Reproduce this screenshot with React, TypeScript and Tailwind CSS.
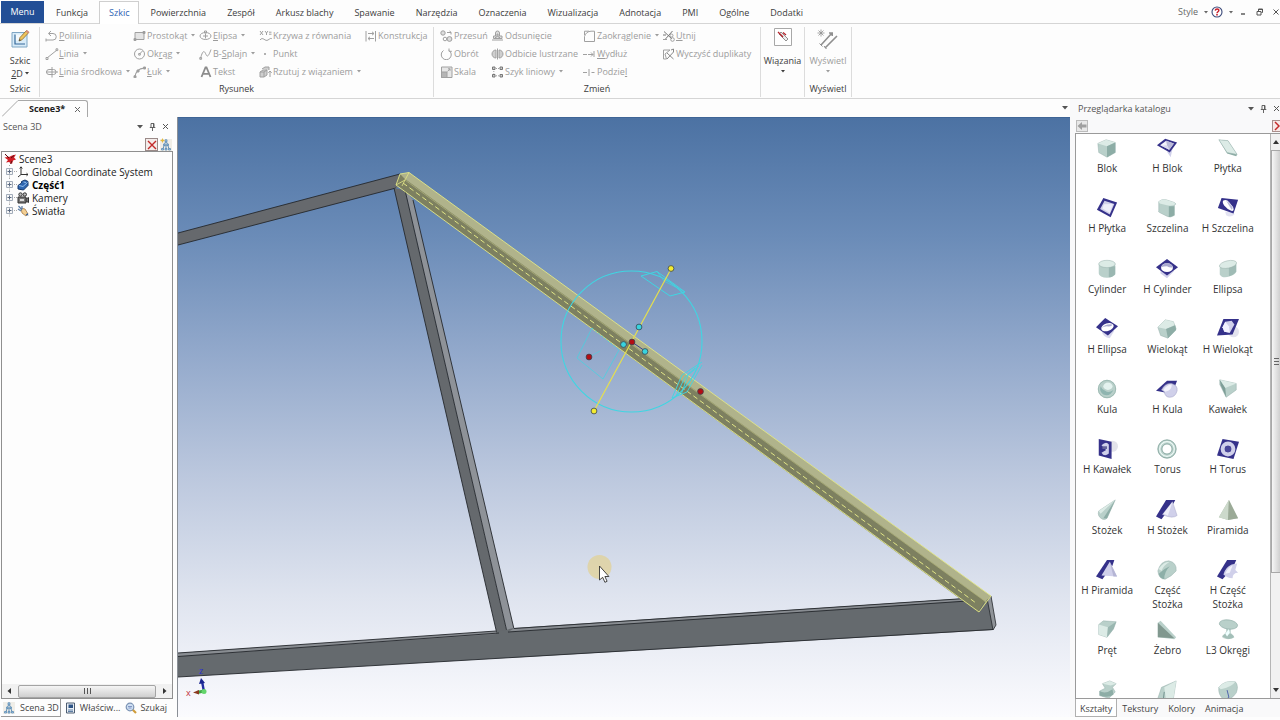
import type { ReactNode } from "react";

/* ---------- text helpers ---------- */

function Accel({ text }: { text: string }) {
  const i = text.indexOf("&");
  if (i < 0) return <>{text}</>;
  return (
    <span>
      {text.slice(0, i)}
      <u>{text[i + 1]}</u>
      {text.slice(i + 2)}
    </span>
  );
}

function Caret() {
  return (
    <svg viewBox="0 0 4 3" className="h-[3px] w-1 shrink-0" fill="currentColor" aria-hidden="true">
      <path d="M0 0h4L2 2.6z" />
    </svg>
  );
}

/* ---------- ribbon ---------- */

const toolIcons: Record<string, ReactNode> = {
  polyline: <path d="M1 10h7a3 3 0 0 0 0-6.5H4M6 1 3.4 3.5 6 6M1 8.5v3" />,
  line: <path d="M2 10 12 2M1 9.5h2v2H1zM11 .8h1.800v1.800H11z" />,
  centerline: <path d="M1 6h12M7 1v10.500M4 3.500h4.500a2.400 2.400 0 0 1 0 5H4a2.400 2.400 0 0 1 0-5" />,
  rect: (
    <>
      <path d="M2 2.500h9v7H2z" fill="#e4e4e4" />
      <path d="M10 1.500h2v2h-2zM1 8.500h2v2H1z" fill="#999" />
    </>
  ),
  circle: (
    <>
      <circle cx="6.500" cy="6" r="5" />
      <path d="M6.500 6 9.500 3M5.700 5.500h1.600v1.600H5.700z" />
    </>
  ),
  arc: (
    <>
      <path d="M2 11C2.500 6 6 2.500 11 2.200" strokeWidth="1.300" />
      <path d="M1 9.800h2v2H1zM10.500 1h2v2h-2zM4 4h2v2H4z" fill="#999" />
    </>
  ),
  ellipse: (
    <>
      <ellipse cx="6.500" cy="6" rx="5.500" ry="3.500" />
      <path d="M6.500 3.500v5M4 6h5M5.500 1h2v2h-2z" />
    </>
  ),
  spline: <path d="M1.500 10.500C4 1 5.500 3 7 6.500S10 7 12 1.500M.8 9.500h1.800v1.800H.8z" />,
  text: <path d="M2.500 11 6.500 1.500h1L11.500 11M4 7.800h6" strokeWidth="1.800" stroke="#8c8c8c" />,
  equation: (
    <>
      <path d="m1 1 3 4M4 1 1 5M6 1l1.500 2L9 1M7.500 3v2M10 2.200h2.500M10 4.200h2.500" />
      <path d="M1 10c3-4 5 2 8 0s3-2 4-1" />
    </>
  ),
  point: <path d="M5.500 5.500h1v1h-1z" fill="#999" />,
  project: (
    <>
      <path d="m1 6 3-2h4v5l-3 2H1zM1 6h4v5M5 6l3-2M3 3l3-2h4v3" fill="#cfcfcf" />
      <path d="M11 11V5M9.300 6.800 11 5l1.700 1.800" />
    </>
  ),
  construction: <path d="M2 1v10.500M11.500 1v10.500M4 3.500h6M8 1.800l2 1.700-2 1.700M10 8.500H4M6 6.800 4 8.500l2 1.700" />,
  move: (
    <>
      <circle cx="3" cy="3" r="2.200" fill="#ddd" />
      <circle cx="5" cy="9" r="1.800" />
      <circle cx="9.500" cy="9" r="2.400" fill="#ddd" />
      <path d="M7 2.500h4v2M9.500 1l1.800 1.500" />
    </>
  ),
  rotate: <path d="M3.500 2.500a5 5 0 1 0 5.500 0M9 .5v2.800h2.800" />,
  scale: (
    <>
      <path d="M1.500 1h10.500v10.500h-10.500z" fill="#e6e6e6" />
      <path d="M1.500 6h5.500v5.500H1.500z" fill="#b5b5b5" />
      <path d="M7.500 5.500 10 2.800M8 2.800h2v2" />
    </>
  ),
  offset: (
    <>
      <path d="M1 10h11M2.500 8.500V6h2V3a1.500 1.500 0 0 1 4 0v3H11v2.500z" fill="#e0e0e0" />
      <path d="M4.500 8.500V7H6V4h1v3h1.500v1.500" />
    </>
  ),
  mirror: (
    <>
      <path d="M6.500 .5v11" />
      <path d="M5 2v8C2.500 10 1 8 1 6s1.500-4 4-4zM8 2v8c2.500 0 4-2 4-4s-1.500-4-4-4z" fill="#cfcfcf" />
    </>
  ),
  pattern: (
    <>
      <path d="M1.500 1h2.500v2.500H1.500zM9 1h2.500v2.500H9zM1.500 8.500h2.500v2.500H1.500zM9 8.500h2.500v2.500H9z" stroke="#777" fill="#ccc" />
      <path d="M5 2.500h3M2.800 5v2.500M5 9.800h3" strokeDasharray="1 1" />
    </>
  ),
  fillet: <path d="M1.500 11.500V6.500Q3 1.500 8 1.200h3.500v10.300zM1.500 5V1.200H6" />,
  extend: <path d="M0 6.500h4M5 6.500h5M8 4.500l2 2-2 2M11 3v6" />,
  split: <path d="M0 6.500h4M8.500 6.500h3M6 3v7" />,
  trim: (
    <>
      <path d="M2 1.500 10 9M10.500 1 3.500 9M1 5h3" stroke="#777" />
      <circle cx="10.500" cy="9.500" r="1.800" />
      <circle cx="9.500" cy="5.500" r="1.500" />
      <path d="M1 9.500h4" />
    </>
  ),
  dedupe: (
    <>
      <path d="M1.500 2v9h3L3 6l5-4z" />
      <path d="m5 5 6.500 6M11.500 4 5 11M9 2l2.500-1v3" stroke="#888" />
    </>
  ),
};

type Tool = { icon: string; label: string; menu?: boolean };

function ToolButton({ icon, label, menu }: Tool) {
  return (
    <button type="button" className="flex h-[18px] items-center text-left whitespace-nowrap text-[#9c9c9c]">
      <svg
        viewBox="0 0 14 12"
        className="h-3 w-[14px] shrink-0"
        fill="none"
        stroke="#a0a0a0"
        strokeWidth="1"
        aria-hidden="true"
      >
        {toolIcons[icon]}
      </svg>
      <Accel text={label} />
      {menu && (
        <span className="pb-0.5 pl-1">
          <Caret />
        </span>
      )}
    </button>
  );
}

const drawTools: Tool[][] = [
  [
    { icon: "polyline", label: "&Polilinia" },
    { icon: "line", label: "&Linia", menu: true },
    { icon: "centerline", label: "&Linia środkowa", menu: true },
  ],
  [
    { icon: "rect", label: "Prostokąt", menu: true },
    { icon: "circle", label: "Ok&rąg", menu: true },
    { icon: "arc", label: "&Łuk", menu: true },
  ],
  [
    { icon: "ellipse", label: "&Elipsa", menu: true },
    { icon: "spline", label: "B-&Splajn", menu: true },
    { icon: "text", label: "Tekst" },
  ],
  [
    { icon: "equation", label: "Krzywa z równania" },
    { icon: "point", label: "Punkt" },
    { icon: "project", label: "Rzutuj z wiązaniem", menu: true },
  ],
  [{ icon: "construction", label: "Konstrukcja" }],
];

const editTools: Tool[][] = [
  [
    { icon: "move", label: "Przesuń" },
    { icon: "rotate", label: "Obrót" },
    { icon: "scale", label: "Skala" },
  ],
  [
    { icon: "offset", label: "Odsunięcie" },
    { icon: "mirror", label: "Odbicie lustrzane" },
    { icon: "pattern", label: "Szyk liniowy", menu: true },
  ],
  [
    { icon: "fillet", label: "Zaokrąglenie", menu: true },
    { icon: "extend", label: "&Wydłuż" },
    { icon: "split", label: "Podzie&l" },
  ],
  [
    { icon: "trim", label: "&Utnij" },
    { icon: "dedupe", label: "Wyczyść duplikaty" },
  ],
];

function Columns({ tools }: { tools: Tool[][] }) {
  return (
    <>
      {tools.map((col, i) => (
        <div key={i} className="flex flex-col">
          {col.map((t) => (
            <ToolButton key={t.label} {...t} />
          ))}
        </div>
      ))}
    </>
  );
}

function Group({ title, className, children }: { title: string; className: string; children: ReactNode }) {
  return (
    <section className={"flex flex-col border-r border-[#dcdcdc] " + className}>
      <div className="flex-1">{children}</div>
      <h2 className="h-4 text-center leading-4">{title}</h2>
    </section>
  );
}

const tabs = [
  "Funkcja",
  "Szkic",
  "Powierzchnia",
  "Zespół",
  "Arkusz blachy",
  "Spawanie",
  "Narzędzia",
  "Oznaczenia",
  "Wizualizacja",
  "Adnotacja",
  "PMI",
  "Ogólne",
  "Dodatki",
];

function Ribbon() {
  return (
    <header className="shrink-0">
      <nav className="flex h-6 items-end border-b border-[#d5d5d5] pt-[2px] pl-px">
        <button type="button" className="h-[22px] w-[43px] bg-[#234f96] text-white">
          Menu
        </button>
        <div className="flex h-[22px] gap-px pl-[2px]">
          {tabs.map((t) =>
            t === "Szkic" ? (
              <button
                key={t}
                type="button"
                className="-mb-px h-[23px] border border-b-0 border-[#cfcfcf] bg-white px-[9px] text-[#2f66b5]"
              >
                {t}
              </button>
            ) : (
              <button key={t} type="button" className="px-[10px] pt-px">
                {t}
              </button>
            ),
          )}
        </div>
        <div className="ml-auto flex h-[22px] items-center text-[#666]">
          <button type="button" className="flex items-center gap-[6px]">
            Style <Caret />
          </button>
          <button type="button" aria-label="Pomoc" className="flex items-center gap-[6px] pl-[3px]">
            <svg viewBox="0 0 12 12" className="size-3">
              <circle cx="6" cy="6" r="5" fill="#fff" stroke="#3b4a7a" strokeWidth="1.100" />
              <path d="M4.300 4.600C4.500 2.400 8 2.500 7.800 4.600 7.600 5.800 6.100 5.800 6 7.300" fill="none" stroke="#c8202c" strokeWidth="1.500" />
              <path d="M5.200 8.100h1.600v1.400H5.200z" fill="#c8202c" />
            </svg>
            <Caret />
          </button>
          <button type="button" aria-label="Minimalizuj" className="flex pl-[7px]">
            <svg viewBox="0 0 6 8" className="h-2 w-[6px]" stroke="#444" strokeWidth="1.300">
              <path d="M1 6h4" />
            </svg>
          </button>
          <button type="button" aria-label="Przywróć" className="flex pl-[10px]">
            <svg viewBox="0 0 8 8" className="size-2" fill="none" stroke="#555">
              <path d="M1 3.500h4v3.500H1zM2.500 3V1h4v3.500H5.500M2.500 1.500h4" />
            </svg>
          </button>
          <button type="button" aria-label="Zamknij" className="flex pl-2">
            <svg viewBox="0 0 8 8" className="size-2" fill="none" stroke="#555">
              <path d="m1.500 1.500 5 5M6.500 1.500l-5 5" />
            </svg>
          </button>
        </div>
      </nav>

      <div className="flex h-[75px] border-b border-[#d5d5d5] pt-[3px] pb-px pl-px">
        <Group title="Szkic" className="w-[39px]">
          <button type="button" className="flex w-full flex-col items-center pt-[2px]">
            <svg viewBox="0 0 20 20" className="size-5" aria-hidden="true">
              <path d="M2 3.500h15v14.500H2z" fill="#d8ebf8" stroke="#7fa6c4" />
              <path d="M5 5.500h7v6H5z" fill="#fff" opacity=".7" />
              <path d="M5 5.500v9.500h10" fill="none" stroke="#34699a" strokeWidth="1.200" />
              <path d="m9 12 1-3.500L16.500 1.500l2.300 2L12 10.800z" fill="#efc45c" stroke="#8a6a2c" strokeWidth=".8" />
              <path d="m15.500 2.600 1.500-1.500 2.300 2-1.500 1.500z" fill="#d78f7c" />
              <path d="m9 12 .6-2 1.400 1.300z" fill="#444" />
            </svg>
            <span className="pt-[5px] leading-[13px]">Szkic</span>
            <span className="flex items-center gap-0.5 leading-[13px]">
              <Accel text="&2D" /> <Caret />
            </span>
          </button>
        </Group>
        <Group title="Rysunek" className="w-[394px]">
          <div className="grid grid-cols-[88px_66px_60px_105px_auto] pl-[5px]">
            <Columns tools={drawTools} />
          </div>
        </Group>
        <Group title="Zmień" className="w-[327px]">
          <div className="grid grid-cols-[51px_92px_79px_auto] pl-[6px]">
            <Columns tools={editTools} />
          </div>
        </Group>
        <Group title="" className="w-11">
          <button type="button" className="flex w-full flex-col items-center">
            <svg viewBox="0 0 20 20" className="size-5" aria-hidden="true">
              <path d="M1.500 1.500h17v17h-17z" fill="#fff" stroke="#a8a8a8" />
              <path d="m6 7 2-2 7 7-2 2z" fill="#eee" stroke="#777" strokeWidth=".8" />
              <path d="m5 5 5 5M10 5.500l3 2.500" stroke="#b5242c" strokeWidth="1.300" />
            </svg>
            <span className="pt-[7px] pb-[3px] leading-[13px]">Wiązania</span>
            <Caret />
          </button>
        </Group>
        <Group title="Wyświetl" className="w-[47px]">
          <button type="button" className="flex w-full flex-col items-center pt-px text-[#9c9c9c]">
            <svg viewBox="0 0 24 22" className="h-[22px] w-6" fill="none" stroke="#8f8f8f" aria-hidden="true">
              <path d="M5 1.500v7M1.500 5h7M2.500 2.500l5 5M7.500 2.500l-5 5" strokeWidth=".8" />
              <path d="m5 17 11-12M13 5h3.200v3M9 20l12-12" strokeWidth="1.600" />
              <path d="m3.500 15.500 3 3M8 18l2.500 3" />
            </svg>
            <span className="pt-1 pb-[3px] leading-[13px]">Wyświetl</span>
            <Caret />
          </button>
        </Group>
      </div>
    </header>
  );
}

/* ---------- docked panel furniture ---------- */

function PanelTitle({ title }: { title: string }) {
  return (
    <div className="flex h-[19px] shrink-0 items-center text-[#555]">
      <h2 className="flex-1">{title}</h2>
      <div className="flex items-center gap-[6px] text-[#555]">
        <button type="button" aria-label="Opcje panelu">
          <svg viewBox="0 0 6 4" className="h-1 w-[6px]" fill="currentColor">
            <path d="M0 0h6L3 3.600z" />
          </svg>
        </button>
        <button type="button" aria-label="Przypnij">
          <svg viewBox="0 0 7 8" className="h-2 w-[7px]" fill="none" stroke="currentColor">
            <path d="M2 4.500v-4h3v4M.8 4.500h5.500M3.500 4.500V8M4.500 .5v4" strokeWidth=".9" />
          </svg>
        </button>
        <button type="button" aria-label="Zamknij panel">
          <svg viewBox="0 0 7 7" className="size-[7px]" fill="none" stroke="currentColor">
            <path d="m1 1 5 5M6 1 1 6" />
          </svg>
        </button>
      </div>
    </div>
  );
}

const Figures = () => (
  <svg viewBox="0 0 12 12" className="size-3 shrink-0 bg-[#f0eee8]" fill="none" stroke="#5d8db5" aria-hidden="true">
    <path d="M6 1.500 2.500 11M6 1.500 9.500 11M4.500 6h3M6 6v5" strokeWidth="1" />
    <path d="M5 .8h2v2H5zM3.500 5h1.500v1.500H3.500zM7 5h1.500v1.500H7zM1.500 9.500h2v1.500h-2zM5 9.500h2v1.500H5zM8.500 9.500h2v1.500h-2z" fill="#a9cbe6" strokeWidth=".8" />
  </svg>
);

const treeItems: { label: string; bold?: boolean; icon: ReactNode }[] = [
  {
    label: "Global Coordinate System",
    icon: (
      <path d="M4 1v7.500h7M4 8.500 1 11M2.700 2.500 4 .8l1.300 1.700M9.500 7.200l1.500 1.300-1.500 1.300" fill="none" stroke="#333" />
    ),
  },
  {
    label: "Część1",
    bold: true,
    icon: (
      <>
        <path d="M1 6.500 4.500 4V2.500L8 1l3 1.500v4L6.500 11 1 10z" fill="#2f66b0" stroke="#17386c" />
        <path d="m2 6.500 4 1 4.500-4M6.500 3 9 3.500" fill="none" stroke="#94bdea" />
      </>
    ),
  },
  {
    label: "Kamery",
    icon: (
      <>
        <path d="M1 5h8v6H1zM9 7l2.500-1.500v5L9 9" fill="#777" stroke="#333" />
        <circle cx="3.500" cy="2.500" r="1.700" fill="#bbb" stroke="#333" />
        <circle cx="7.800" cy="2.500" r="1.700" fill="#bbb" stroke="#333" />
        <path d="M3 7h4v2H3z" fill="#ddd" />
      </>
    ),
  },
  {
    label: "Światła",
    icon: (
      <>
        <path d="m4 3 4 1 3 5-2 2-4-3z" fill="#f3cf93" stroke="#a77b45" strokeWidth=".8" />
        <path d="m1.500 1 3.500 4M1 4l3 2M5 1v3" stroke="#5b7ea8" strokeWidth="1.200" />
        <path d="m8.500 10 2-2 1 2.500z" fill="#355f99" />
      </>
    ),
  },
];

function ScenePanel() {
  return (
    <aside className="flex w-[178px] shrink-0 flex-col border-r border-[#8a8f96] pl-px">
      <div className="flex flex-col pr-2 pl-[2px]">
        <PanelTitle title="Scena 3D" />
      </div>
      <div className="flex h-[15px] shrink-0 items-end justify-end gap-[2px] pr-[5px]">
        <button type="button" aria-label="Usuń" className="flex size-[13px] items-center justify-center border border-[#9a8a88] bg-[#f4ecea]">
          <svg viewBox="0 0 10 10" className="size-[10px]" stroke="#c22a2a" strokeWidth="1.400">
            <path d="m1 1 8 8M9 1 1 9" />
          </svg>
        </button>
        <button type="button" aria-label="Struktura" className="relative flex h-[13px] items-center">
          <Figures />
          <svg viewBox="0 0 5 5" className="absolute top-0 left-0 size-[5px]" fill="#e6bb3e">
            <path d="M2.500 0 3.300 1.700 5 2.500 3.300 3.300 2.500 5 1.700 3.300 0 2.500 1.700 1.700z" />
          </svg>
        </button>
      </div>
      <div className="mr-[4px] flex min-h-0 flex-1 flex-col border border-[#8f8f8f]">
        <div className="flex-1 overflow-hidden text-[10px] text-[#222]">
          <div className="flex h-[13px] items-center gap-[2px] pl-[2px]">
            <svg viewBox="0 0 13 12" className="h-3 w-[13px]" aria-hidden="true">
              <path d="M1 1.500 5 4l3-1.500 4-1-2 3 2 2-3 1-1 3.500-3-2-3 .5L4 7 .5 4.500 3.500 4z" fill="#d01f26" />
              <path d="m1 1 4 4M8 8l-1.500 3M10 2.500 7 5" stroke="#5a0f12" fill="none" />
            </svg>
            <span>Scene3</span>
          </div>
          <ul>
            {treeItems.map((item) => (
              <li key={item.label} className="flex h-[13px] items-center pl-[3px]">
                <button type="button" aria-label={"Rozwiń " + item.label} className="flex">
                  <svg viewBox="0 0 12 13" className="h-[13px] w-3" fill="none">
                    <path d="M4.500 0v2M4.500 10.500V13M9 6.500h3" stroke="#aaa" strokeDasharray="1 1" />
                    <path d="M1.500 3.500h6v6h-6z" stroke="#a3adba" fill="#f7f7f7" />
                    <path d="M2.500 6.500h4M4.500 4.500v4" stroke="#5c6b82" />
                  </svg>
                </button>
                <svg viewBox="0 0 12 12" className="size-3" aria-hidden="true">
                  {item.icon}
                </svg>
                <span className={item.bold ? "ml-[3px] font-bold text-black" : "ml-[3px]"}>{item.label}</span>
              </li>
            ))}
          </ul>
        </div>
        <div className="flex h-[14px] shrink-0 items-center justify-between bg-[#f1f1f1] px-[5px]">
          <svg viewBox="0 0 5 6" className="h-[6px] w-[5px]" fill="#333">
            <path d="M4 0v6L.5 3z" />
          </svg>
          <div className="mx-[6px] flex h-[13px] flex-1 items-center justify-center gap-[2px] rounded-[2px] border border-[#a4a4a4] bg-linear-to-b from-[#f5f5f5] to-[#cfcfcf]">
            <i className="h-[6px] w-px bg-[#555]" />
            <i className="h-[6px] w-px bg-[#555]" />
            <i className="h-[6px] w-px bg-[#555]" />
          </div>
          <svg viewBox="0 0 5 6" className="h-[6px] w-[5px]" fill="#333">
            <path d="M1 0v6l3.500-3z" />
          </svg>
        </div>
      </div>
      <div className="flex h-[18px] shrink-0 text-[#444]">
        <button type="button" className="flex h-[18px] items-center gap-[5px] border-r border-b border-[#9a9a9a] pt-px pr-px pl-[2px] whitespace-nowrap">
          <Figures />
          Scena 3D
        </button>
        <button type="button" className="flex items-center gap-1 pl-1 whitespace-nowrap">
          <svg viewBox="0 0 11 12" className="h-3 w-[11px]" aria-hidden="true">
            <path d="M1.500 1h8v10h-8z" fill="#e9eff5" stroke="#4c5c70" />
            <path d="M3.500 2.500H8v3.500H3.500z" fill="#2d5384" />
            <path d="M3 8h5M3 9.500h5" stroke="#5f7ea4" />
          </svg>
          Właściw...
        </button>
        <button type="button" className="flex items-center gap-[3px] pl-[5px] whitespace-nowrap">
          <svg viewBox="0 0 12 12" className="size-3" aria-hidden="true">
            <path d="m7 7 4 4" stroke="#cf9c3a" strokeWidth="2.200" />
            <circle cx="5" cy="5" r="3.800" fill="#cfe0f2" stroke="#7c93b4" strokeWidth="1.200" />
            <path d="M3 4.500h4M3.500 6h3" stroke="#8296c5" />
          </svg>
          Szukaj
        </button>
      </div>
    </aside>
  );
}

/* ---------- 3D viewport ---------- */

const Dot = ({ x, y, fill }: { x: number; y: number; fill: string }) => (
  <circle cx={x} cy={y} r="2.900" fill={fill} stroke="#3a4450" strokeWidth=".8" />
);

function Viewport() {
  return (
    <main className="min-w-0 flex-1 overflow-hidden border-t border-[#3f6596] bg-[#9fb2d2]">
      <svg viewBox="178 118 892 599" preserveAspectRatio="xMidYMid slice" className="block size-full" role="img" aria-label="Scena 3D">
        <defs>
          <linearGradient id="sky" x1="0" y1="0" x2="0" y2="1">
            <stop offset="0" stopColor="#4c72a3" />
            <stop offset=".2" stopColor="#6b8cb8" />
            <stop offset=".4" stopColor="#94aacc" />
            <stop offset=".6" stopColor="#bcc8de" />
            <stop offset=".8" stopColor="#dfe4ef" />
            <stop offset="1" stopColor="#fbfbfe" />
          </linearGradient>
        </defs>
        <rect x="178" y="118" width="892" height="599" fill="url(#sky)" />

        <g strokeLinejoin="round">
          <path d="M178 233 400 174 410 182 396 188 178 245z" fill="#66696d" />
          <path d="M178 233 400 174M178 245 396 188" stroke="#25282c" strokeWidth=".9" fill="none" />
          <path d="M394 188 405 190 507 632 497 634z" fill="#65696d" />
          <path d="M405 190 413 200 514 629 507 632z" fill="#8e9298" />
          <path d="M394 188 497 634M405 190 507 632M413 200 514 629" stroke="#25282c" strokeWidth=".9" fill="none" />
          <path d="M178 653 496 632 514 628 985 597 992 601 993 630 178 677z" fill="#656a6e" />
          <path d="M178 653 496 631V634L178 656.500z" fill="#898d92" />
          <path d="M514 628.500 978 597.500 970 600.500 508 632z" fill="#898d92" />
          <path d="M987 598 991 596 996 625 993 630z" fill="#8f9398" stroke="#25282c" strokeWidth=".8" />
          <path d="M178 653 496 631M178 656.500 499 633M514 628.500 980 597.500M508 632 975 600.500M178 677 993 629.500" stroke="#25282c" strokeWidth=".9" fill="none" />
        </g>

        <path d="M400 174 409 172.500 991 596 985 602 405 181z" fill="#b0b38b" />
        <path d="M396 185 400 174 405 179 985 601 978 612z" fill="#7d8060" />
        <path d="M985 602 991 596 980 611z" fill="#969a70" />
        <g fill="none" stroke="#e2e687">
          <path d="M396 185 400 174 409 172.500 991 596 979 612z" strokeWidth=".9" />
          <path d="M405 180 402 186M396 185 405 180M409 172.500 405 180" strokeWidth=".8" />
          <path d="M405 180 986 602" strokeWidth=".5" stroke="#c8cb86" />
          <path d="M403 183 976 603" strokeDasharray="5 3" />
        </g>

        <g fill="none" stroke="#3fd6e2">
          <circle cx="631.500" cy="341.500" r="70.500" strokeWidth="1.100" />
          <path d="M641 276 657 271.500 685 292 670 296z" />
          <path d="M657 271.500 664 281 685 292" strokeWidth=".7" />
          <path d="M592 328 577 358 603 379 619 350" strokeWidth=".7" />
          <path d="M592 328 619 350" strokeDasharray="2 2" strokeWidth=".8" />
          <path d="M589 357 600 351" strokeWidth=".5" />
          <path d="M702 362 682 375 672 398 687 392 702 365M695 368 685 377 676 396M699 366 688 375 681 395" strokeWidth=".9" />
        </g>

        <path d="M671 269 594 411" stroke="#e6e04c" strokeWidth="1.200" />
        <path d="M632 342 645 351" stroke="#3b3f90" />
        <Dot x={671} y={268.5} fill="#f4ec30" />
        <Dot x={594} y={411} fill="#f4ec30" />
        <Dot x={639} y={327} fill="#38d3de" />
        <Dot x={623.5} y={344.5} fill="#38d3de" />
        <Dot x={645} y={351.5} fill="#38d3de" />
        <Dot x={632} y={342} fill="#b40d14" />
        <Dot x={589} y={357} fill="#b40d14" />
        <Dot x={700.5} y={391.5} fill="#b40d14" />

        <circle cx="599.500" cy="567" r="12" fill="#e5cf82" opacity=".6" />
        <path d="M599.500 566v14l3.200-2.700 2.200 5 2.200-1-2.200-4.800h4z" fill="#fff" stroke="#333" strokeWidth=".9" />

        <path d="M204 692 202 681" stroke="#2430a0" strokeWidth="2.400" />
        <path d="m199 684 2-6 4 5z" fill="#1c2790" />
        <path d="M204 691 197 692.500" stroke="#3fa545" strokeWidth="3" />
        <path d="m199 690-6 2.500 6 2z" fill="#8a3a20" />
        <circle cx="204" cy="691.500" r="2.500" fill="#63d56b" />
        <text x="199" y="674" className="font-['Open_Sans',sans-serif] text-[9px]" fill="#2a2ed0">z</text>
        <text x="186" y="696" className="font-['Open_Sans',sans-serif] text-[9px]" fill="#c03040">x</text>
      </svg>
    </main>
  );
}

/* ---------- catalogue ---------- */

const solidStroke = { stroke: "#92aca6", strokeWidth: 0.5 };
const L = "#dcebe6";
const M = "#b9d0ca";
const D = "#8dada6";
const N = "#35318a";
const V = "#d0d0ea";

const shapes: { label: string; art: ReactNode }[] = [
  { label: "Blok", art: <><path d="m2 7 9-4 10 3v11l-9 5-9-5z" fill={M} {...solidStroke} /><path d="m2 7 9-4 10 3-9 4z" fill={L} /><path d="m12 10 9-4v11l-9 5z" fill={D} /></> },
  { label: "H Blok", art: <><path d="m12 16 5-2 1-1-2 9z" fill={V} /><path d="m1 9 9-7 13 4-8 11z" fill={N} /><path d="m4.500 9 6.500-5 8.500 3-5 7z" fill="#f2f2fb" /><path d="m11 4 1 5 2.500 5 5-7z" fill="#b9b9d8" /><path d="m6 9.500 6-.5 2.500 5z" fill="#d8d8ee" /></> },
  { label: "Płytka", art: <><path d="m2 3 10 1 10 15-1 2-10-3z" fill={D} /><path d="m2 3 10 1 10 15-11-2z" fill={L} {...solidStroke} /></> },
  { label: "H Płytka", art: <><path d="m8 1 15 5-7 16L1 14z" fill={N} /><path d="M9.300 4 20 7.500 15 19 4.500 13z" fill={V} /><path d="m8.500 8 10-.5-3.500 10-8-5z" fill="#eeeefa" /></> },
  { label: "Szczelina", art: <><path d="M3 5q3-3 8-2l9 3q3 2 0 3v11q-4 3-8 1l-8-4q-2-1-1-2z" fill={M} {...solidStroke} /><path d="M3 5q3-3 8-2l9 3q2 2-1 3-4 1-7 0L4 7z" fill={L} /><path d="M14 10h6v10q-3 2-6 2z" fill={D} /></> },
  { label: "H Szczelina", art: <><path d="M9 16h9l1 3q-4 4-9 1z" fill={V} opacity=".6" /><path d="m5 1 18 2-5 15L1 12z" fill={N} /><path d="M6.500 4q4-2 7 2l4 5q2 5-2 4-4-1-6-4-4-4-3-7" fill="#fff" /><path d="m10 4 6 10q1.500-1 1-3l-4-5z" fill="#b9b9da" /></> },
  { label: "Cylinder", art: <><path d="M3 6v11a9 4.500 0 0 0 18 0V6z" fill={M} /><path d="M14 9h7v9q-3 3-7 3z" fill={D} opacity=".7" /><ellipse cx="12" cy="6.500" rx="9" ry="4" fill={L} {...solidStroke} /></> },
  { label: "H Cylinder", art: <><path d="M5 14v3l7 5 8-8z" fill={V} /><path d="m12 1 12 9-12 9L0 10z" fill={N} /><ellipse cx="12" cy="10.500" rx="6.500" ry="4.800" fill="#fff" /><path d="M5.500 10q2-4 6.500-4.500Q17 6 18.500 10q-3 1-6.500-1-4 0-6.500 1" fill="#a9a9cf" /></> },
  { label: "Ellipsa", art: <><path d="M3 9v9q3 5 11 2 6-2 7-5V6z" fill={M} /><path d="M13 10q6-1 8-4v9q-3 4-8 5z" fill={D} opacity=".6" /><ellipse cx="12" cy="7" rx="9.500" ry="4" transform="rotate(-12 12 7)" fill={L} {...solidStroke} /></> },
  { label: "H Ellipsa", art: <><path d="M6 14q2 8 9 8l5-8z" fill={V} opacity=".8" /><path d="m10 0 14 9-11 10L0 10z" fill={N} /><ellipse cx="12.500" cy="10" rx="7" ry="4.200" transform="rotate(-18 12.500 10)" fill="#fff" /><path d="M6 11q4-5 12-4-1 3-6 2-4 0-6 2" fill="#a9a9cf" /></> },
  { label: "Wielokąt", art: <><path d="m2 10 8-8 9 2 3 8-9 10-8-3z" fill={M} {...solidStroke} /><path d="m2 10 8-8 9 2 1 4-9 4z" fill={L} /><path d="m11 12 10-4 1 5-9 9z" fill={D} /></> },
  { label: "H Wielokąt", art: <><circle cx="18" cy="15" r="6" fill="#e3e3ee" /><path d="M7 1h17l-7 17-17 1z" fill={N} /><path d="m9 4 7-1 3 4-5 9-6-1-2-5z" fill={V} /><path d="m9 4 4 5 1 7-6-1-2-5z" fill="#f2f2ff" /></> },
  { label: "Kula", art: <><circle cx="12" cy="12" r="10" fill={M} /><circle cx="12" cy="12" r="9.500" fill="none" stroke={D} strokeWidth=".7" /><path d="M5 9a8 8 0 0 0 3 9q7 3 11-5-5 4-9 1-4-2-5-5" fill="#8fb5b0" /><ellipse cx="13" cy="9" rx="5" ry="4" fill="#e4f2ef" /></> },
  { label: "H Kula", art: <><path d="M0 14 12 3h11l-4 10-8 3z" fill={N} /><path d="M6 13q4-8 11-7 7 2 6 8-2 7-8 7-5 0-6-6z" fill={V} stroke="#9f9fc4" strokeWidth=".6" /><path d="M8 13q4-6 9-6 1 6-7 8z" fill="#f2f2fb" /></> },
  { label: "Kawałek", art: <><path d="M3 2v5l7 14 11-8V6z" fill={M} {...solidStroke} /><path d="m3 2 18 4-12 5z" fill={L} /><path d="m3 2 6 9 1 10-6-13z" fill="#7e9e97" /></> },
  { label: "H Kawałek", art: <><circle cx="18" cy="9" r="6" fill="#e3e3ea" /><path d="m3 1 14 3v19L3 19z" fill={N} /><path d="M6 8q5-5 8-1v10q-5 4-8-1l5-3z" fill={V} /><path d="M7 9h5v3H7z" fill="#66659c" /></> },
  { label: "Torus", art: <><circle cx="12" cy="12" r="7.800" fill="none" stroke={M} strokeWidth="4.500" /><circle cx="12" cy="12" r="8" fill="none" stroke="#eefaf7" strokeWidth="1.300" /><circle cx="12" cy="12" r="10" fill="none" stroke="#7c9f98" strokeWidth=".9" /><circle cx="12" cy="12" r="5.500" fill="none" stroke="#7c9f98" strokeWidth=".9" /></> },
  { label: "H Torus", art: <><path d="m6 1 18 3-6 19-18-4z" fill={N} /><circle cx="12" cy="12" r="5.800" fill="none" stroke={V} strokeWidth="4.500" /><circle cx="12" cy="12" r="3.500" fill="#4a479a" /></> },
  { label: "Stożek", art: <><path d="M21 1 3 13q-2 6 4 9 3 1 5-1z" fill={M} {...solidStroke} /><path d="M21 1 8 21l4 0z" fill={D} /><path d="M21 1 3 13l2 3z" fill={L} /></> },
  { label: "H Stożek", art: <><path d="m0 19 11-18h10l-2 4-13 17z" fill={N} /><path d="m18 3 5 15q-5 4-16-1z" fill={V} stroke="#a5a5c5" strokeWidth=".5" /><path d="M18 3 8 16l5 2z" fill="#eeeefa" /></> },
  { label: "Piramida", art: <><path d="m13 1 10 20-11 2-10-3z" fill="#b2c2ae" /><path d="M13 1 2 20l10 3z" fill="#ccd9cb" /><path d="m13 1 10 20-11 2z" fill="#91a08d" opacity=".7" /></> },
  { label: "H Piramida", art: <><path d="m0 19 12-18h8l-2 6L7 22z" fill={N} /><path d="m15 3 8 16-17-1z" fill={V} /><path d="m15 3 4 16h4z" fill="#b5b5d4" /></> },
  { label: "Część Stożka", art: <><path d="M2 13Q5 2 14 2q9 2 8 11-5 6-12 9-7 0-8-9" fill={M} {...solidStroke} /><path d="M3 11q5-8 12-8-7 4-9 10z" fill={L} /><path d="M9 22q0-8 6-14-7 3-12 8 1 5 6 6" fill="#8dafa8" /></> },
  { label: "H Część Stożka", art: <><path d="m0 19 11-18h10l-4 9L6 22z" fill={N} /><path d="M7 17q2-8 9-11l6-1-2 7 3 3q-6 0-6 6-6 0-10-4" fill={V} /><path d="M9 16q2-6 8-9l-3 8z" fill="#f2f2fb" /></> },
  { label: "Pręt", art: <><path d="m3 6 5-4 14 1-3 8-7 9-9-3z" fill={M} {...solidStroke} /><path d="m3 6 10 3-1 11-9-3z" fill={L} /><path d="m13 9 9-6-3 8-7 9z" fill={D} opacity=".7" /></> },
  { label: "Żebro", art: <><path d="m2 4 3-2 17 18-2 2L2 20z" fill={M} /><path d="M2 4v16l18 1z" fill="#81988f" /></> },
  { label: "L3 Okręgi", art: <><path d="M10 10h5v5l4 5q-6 4-13-1l4-5z" fill={M} /><ellipse cx="12" cy="19" rx="6.500" ry="3" fill={D} opacity=".5" /><ellipse cx="12.500" cy="6" rx="10" ry="5" transform="rotate(8 12.500 6)" fill={M} stroke={D} strokeWidth=".7" /><path d="m13 11-4 5 2 3 3-4z" fill="#efffff" /></> },
];

const clippedShapes: { label: string; art: ReactNode }[] = [
  { label: "L3 Skręt", art: <><path d="m7 4 8-3 7 3-4 4 3 5-7 7-10-3v-5l6-3z" fill={M} {...solidStroke} /><path d="m7 4 8-3 7 3-6 2z" fill={L} /><path d="M4 12q6 4 14-2l1 6q-6 4-15 1z" fill={D} /></> },
  { label: "Klin", art: <><path d="m2 20 4-12 16-7-3 19-8 3z" fill={M} {...solidStroke} /><path d="m9 8 13-7-3 19-8 2z" fill={L} /><path d="m9 13-1 8" stroke="#6c8e8a" /></> },
  { label: "Walec ścięty", art: <><path d="M2 8q6-8 18-6 4 4 1 12-6 9-14 7-6-5-5-13" fill={M} {...solidStroke} /><path d="M2 8q6-8 18-6-4 6-16 8z" fill={L} /><path d="m11 11 2 8-3 2" stroke="#485caa" fill="none" /></> },
];

function CataloguePanel() {
  return (
    <aside className="flex w-[210px] shrink-0 flex-col bg-[#f9f9fa] pl-[5px]">
      <div className="flex flex-col overflow-hidden pl-[3px]">
        <PanelTitle title="Przeglądarka katalogu" />
      </div>
      <div className="flex h-[15px] shrink-0 items-center justify-between pl-px">
        <button type="button" aria-label="Wstecz" className="flex size-3 items-center justify-center border border-[#bbb] bg-[#e8e8e8]">
          <svg viewBox="0 0 10 10" className="size-[10px]" fill="#a0a0a0">
            <path d="M5 1v2.500h4.500v3H5V9L.5 5z" />
          </svg>
        </button>
        <button type="button" aria-label="Usuń katalog" className="flex h-3 w-2 items-center justify-end overflow-hidden border border-r-0 border-[#a98f8c] bg-[#f7e9e7]">
          <svg viewBox="0 0 6 10" className="h-[10px] w-[6px]" fill="none" stroke="#c42a2a" strokeWidth="1.500">
            <path d="m1 1 4 4-4 4" />
          </svg>
        </button>
      </div>
      <div className="flex min-h-0 flex-1 border border-r-0 border-[#9a9a9a] bg-white">
        <div className="min-w-0 flex-1 overflow-hidden">
          <ul className="grid h-[603px] w-[182px] grid-cols-3 grid-rows-10 pl-px text-center text-[10px] leading-[14px] text-[#333]">
            {shapes.map((s) => (
              <li key={s.label} className="flex h-0 justify-center pt-[3px]">
                <button type="button" className="flex h-fit w-[56px] shrink-0 flex-col items-center gap-[2px]">
                  <svg viewBox="0 0 24 24" className="size-[22px] shrink-0" aria-hidden="true">
                    {s.art}
                  </svg>
                  <span className="flex justify-center">{s.label}</span>
                </button>
              </li>
            ))}
            {clippedShapes.map((s) => (
              <li key={s.label} className="flex h-0 justify-center pt-[3px]">
                <button type="button" aria-label={s.label} className="h-fit">
                  <svg viewBox="0 0 24 24" className="size-[22px]" aria-hidden="true">
                    {s.art}
                  </svg>
                </button>
              </li>
            ))}
          </ul>
        </div>
        <div className="flex w-[10px] shrink-0 flex-col items-center border-l border-[#b5b5b5] bg-[#f1f1f1]">
          <svg viewBox="0 0 6 4" className="my-[6px] h-1 w-[6px] shrink-0" fill="#333">
            <path d="M0 4h6L3 0z" />
          </svg>
          <div className="flex h-[75%] w-full flex-col items-center justify-center gap-[2px] border border-r-0 border-[#a8a8a8] bg-linear-to-r from-[#f6f6f6] to-[#cfcfcf]">
            <i className="h-px w-[5px] bg-[#666]" />
            <i className="h-px w-[5px] bg-[#666]" />
            <i className="h-px w-[5px] bg-[#666]" />
          </div>
          <svg viewBox="0 0 6 4" className="mt-auto mb-[6px] h-1 w-[6px] shrink-0" fill="#333">
            <path d="M0 0h6L3 4z" />
          </svg>
        </div>
      </div>
      <div className="flex h-[18px] shrink-0 text-[#444]">
        <button type="button" className="border-x border-b border-[#b0b0b0] bg-white px-1 pt-[2px]">
          Kształty
        </button>
        {["Tekstury", "Kolory", "Animacja"].map((t) => (
          <button key={t} type="button" className="px-[5px] pt-px">
            {t}
          </button>
        ))}
      </div>
    </aside>
  );
}

export default function App() {
  return (
    <div className="flex h-screen flex-col overflow-hidden bg-[#fdfdfd] pb-[3px] font-['Open_Sans','Noto_Sans',sans-serif] text-[9px] leading-[14px] text-[#3c3c3c]">
      <Ribbon />
      <div className="flex min-h-0 flex-1">
        <div className="flex min-w-0 flex-1 flex-col">
          <div className="flex h-[18px] shrink-0 items-end justify-between">
            <div className="flex h-[17px] items-stretch pl-[2px]">
              <svg viewBox="0 0 17 17" className="h-[17px] w-[17px]" fill="none" stroke="#a8a8a8" aria-hidden="true">
                <path d="M0 16.500 16 .5h1" />
              </svg>
              <div className="flex items-center gap-[9px] rounded-tr-[3px] border-t border-r border-[#a8a8a8] pr-[6px] pl-[10px]">
                <button type="button" className="font-bold text-[#222]">
                  Scene3*
                </button>
                <button type="button" aria-label="Zamknij Scene3">
                  <svg viewBox="0 0 7 7" className="size-[7px]" stroke="#666">
                    <path d="m1 1 5 5M6 1 1 6" />
                  </svg>
                </button>
              </div>
            </div>
            <button type="button" aria-label="Lista dokumentów" className="flex h-[18px] items-center pr-[2px]">
              <svg viewBox="0 0 6 4" className="h-1 w-[6px]" fill="#555">
                <path d="M0 0h6L3 3.600z" />
              </svg>
            </button>
          </div>
          <div className="flex min-h-0 flex-1">
            <ScenePanel />
            <Viewport />
          </div>
        </div>
        <CataloguePanel />
      </div>
    </div>
  );
}
